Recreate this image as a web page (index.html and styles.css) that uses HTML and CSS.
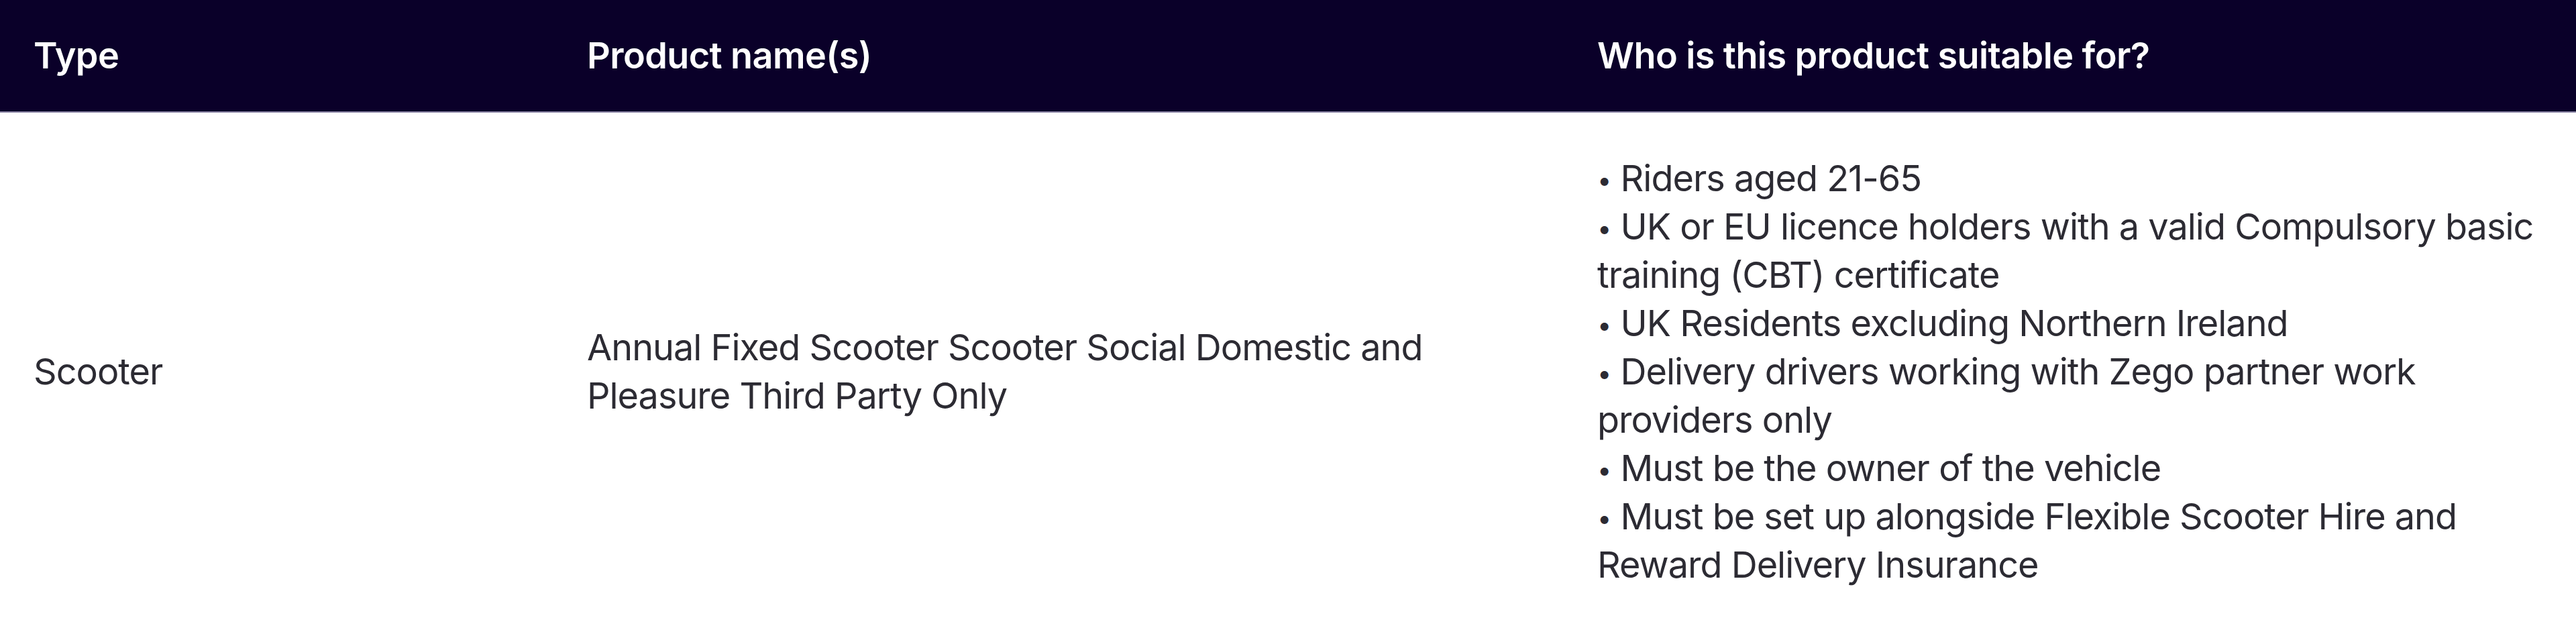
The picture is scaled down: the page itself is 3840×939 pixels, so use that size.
FILE: index.html
```html
<!DOCTYPE html>
<html lang="en">
<head>
<meta charset="utf-8">
<title>Products</title>
<link rel="stylesheet" href="styles.css">
</head>
<body>
<div class="table">
  <div class="row head">
    <div class="cell">Type</div>
    <div class="cell">Product name(s)</div>
    <div class="cell">Who is this product suitable for?</div>
  </div>
  <div class="row body">
    <div class="cell">Scooter</div>
    <div class="cell">Annual Fixed Scooter Scooter Social Domestic and Pleasure Third Party Only</div>
    <div class="cell">
      <div class="item"><span class="dot">•</span> Riders aged 21-65</div>
      <div class="item"><span class="dot">•</span> UK or EU licence holders with a valid Compulsory basic training (CBT) certificate</div>
      <div class="item"><span class="dot">•</span> UK Residents excluding Northern Ireland</div>
      <div class="item"><span class="dot">•</span> Delivery drivers working with Zego partner work providers only</div>
      <div class="item"><span class="dot">•</span> Must be the owner of the vehicle</div>
      <div class="item"><span class="dot">•</span> Must be set up alongside Flexible Scooter Hire and Reward Delivery Insurance</div>
    </div>
  </div>
</div>
</body>
</html>
```
FILE: styles.css
```css
html, body {
  margin: 0;
  padding: 0;
  background: #ffffff;
}
body {
  font-family: Inter, "Noto Sans", "Liberation Sans", sans-serif;
  font-size: 54px;
  line-height: 72px;
  letter-spacing: -1px;
  color: #2c2b33;
}
.table {
  width: 3840px;
}
.row {
  display: grid;
  grid-template-columns: 825px 1506px 1fr;
}
.head {
  background: #0a0029;
  color: #ffffff;
  font-weight: 600;
  letter-spacing: -0.6px;
  height: 166px;
  border-bottom: 2px solid #8f8aa8;
  align-items: center;
}
.cell {
  padding: 0 50px;
}
.body {
  align-items: center;
  min-height: 771px;
}
.body .cell {
  padding-top: 59px;
  padding-bottom: 59px;
}
.dot {
  font-size: 38px;
  line-height: 0;
  vertical-align: 3px;
}
```
